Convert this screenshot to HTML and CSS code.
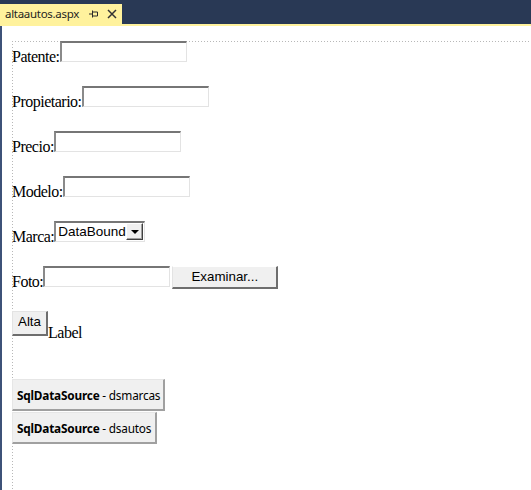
FILE: index.html
```html
<!DOCTYPE html>
<html>
<head>
<meta charset="utf-8">
<link rel="stylesheet" href="styles.css">
</head>
<body>
<div class="topbar">
  <div class="tab">
    <span class="tab-title">altaautos.aspx</span>
    <svg class="pin" width="9" height="8" viewBox="0 0 9 8"><path d="M0 4H3.5M3.5 0.5V7.5M3.5 2H8.5V6H3.5" fill="none" stroke="#2b2b2b" stroke-width="1"/></svg>
    <svg class="close" width="10" height="10" viewBox="0 0 10 10"><path d="M1 1L9 9M9 1L1 9" fill="none" stroke="#333" stroke-width="1.5"/></svg>
  </div>
</div>
<div class="tabline"></div>
<div class="main">
  <div class="edge"></div>
  <div class="wrap">
    <div class="surface">
      <div class="row"><span class="lbl">Patente:</span><span class="tb"></span></div>
      <div class="row"><span class="lbl">Propietario:</span><span class="tb"></span></div>
      <div class="row"><span class="lbl">Precio:</span><span class="tb"></span></div>
      <div class="row"><span class="lbl">Modelo:</span><span class="tb"></span></div>
      <div class="row"><span class="lbl">Marca:</span><span class="sel"><span class="sel-text">DataBound</span><span class="sel-btn"><span class="tri"></span></span></span></div>
      <div class="row"><span class="lbl">Foto:</span><span class="tb"></span><span class="btn btn-exam">Examinar...</span></div>
      <div class="row row-alta"><span class="btn btn-alta">Alta</span><span class="lbl lbl-label">Label</span></div>
      <div class="ds ds1"><b>SqlDataSource</b> - dsmarcas</div>
      <div class="ds ds2"><b>SqlDataSource</b> - dsautos</div>
    </div>
  </div>
</div>
</body>
</html>
```

FILE: styles.css
```css
html, body {
  margin: 0;
  padding: 0;
  background: #ffffff;
  width: 531px;
  height: 490px;
  overflow: hidden;
}
body {
  font-family: "Liberation Serif", "Times New Roman", serif;
  font-size: 16px;
  color: #000;
}
.topbar {
  height: 24px;
  background: #293955;
  display: flex;
  align-items: flex-end;
}
.tab {
  height: 20px;
  width: 122px;
  background: #fff29d;
  display: flex;
  align-items: center;
  box-sizing: border-box;
  padding-left: 5px;
  font-family: "Noto Sans", "Open Sans", sans-serif;
  font-size: 11.5px;
  color: #1e1e1e;
}
.tab-title {
  line-height: 16px;
  letter-spacing: -0.3px;
}
.pin {
  margin-left: 10px;
  display: block;
}
.close {
  margin-left: 9px;
  display: block;
}
.tabline {
  height: 2px;
  background: #fff29d;
}
.main {
  display: flex;
  height: 464px;
}
.edge {
  width: 2px;
  background: #3e5278;
  flex: none;
}
.wrap {
  flex: 1;
  padding: 15px 0 0 10px;
}
.surface {
  height: 100%;
  background-image:
    repeating-linear-gradient(to right, #b8b8b8 0 1px, transparent 1px 3px),
    repeating-linear-gradient(to bottom, #b8b8b8 0 1px, transparent 1px 3px);
  background-size: 100% 1px, 1px 100%;
  background-repeat: no-repeat;
  background-position: 0 0, 0 0;
}
.row {
  display: flex;
  align-items: flex-start;
  height: 21px;
  margin-bottom: 24px;
}
.lbl {
  line-height: 16px;
  margin-top: 8px;
  white-space: nowrap;
  letter-spacing: -0.5px;
}
.tb {
  display: block;
  width: 127px;
  height: 21px;
  box-sizing: border-box;
  border-style: solid;
  border-width: 2px 1px 1px 2px;
  border-color: #767676 #e3e3e3 #e3e3e3 #8a8a8a;
  background: #fff;
  flex: none;
}
.sel {
  display: flex;
  width: 91px;
  height: 21px;
  box-sizing: border-box;
  border-style: solid;
  border-width: 2px 1px 1px 2px;
  border-color: #767676 #e3e3e3 #e3e3e3 #8a8a8a;
  background: #fff;
  font-family: "Liberation Sans", Arial, sans-serif;
  font-size: 13.5px;
  flex: none;
}
.sel-text {
  flex: 1;
  line-height: 17px;
  padding-left: 2px;
}
.sel-btn {
  width: 17px;
  height: 17px;
  margin: 0 1px 0 0;
  box-sizing: border-box;
  background: #f0f0f0;
  border-style: solid;
  border-width: 1px;
  border-color: #ffffff #404040 #404040 #ffffff;
  box-shadow: inset -1px -1px 0 #a0a0a0;
  display: flex;
  align-items: center;
  justify-content: center;
}
.tri {
  width: 0;
  height: 0;
  border-left: 4px solid transparent;
  border-right: 4px solid transparent;
  border-top: 4px solid #000;
  margin-top: 1px;
}
.btn {
  display: flex;
  align-items: center;
  justify-content: center;
  box-sizing: border-box;
  background: #f0f0f0;
  border-style: solid;
  border-width: 1px 2px 2px 1px;
  border-color: #ffffff #6e6e6e #6e6e6e #e3e3e3;
  font-family: "Liberation Sans", Arial, sans-serif;
  font-size: 13.33px;
  color: #000;
  flex: none;
}
.btn-exam {
  width: 106px;
  height: 23px;
  margin-left: 2px;
  padding-bottom: 2px;
}
.row-alta {
  height: 25px;
  margin-bottom: 43px;
}
.btn-alta {
  width: 36px;
  height: 25px;
  border-color: #e3e3e3 #6e6e6e #6e6e6e #e3e3e3;
  padding-bottom: 3px;
}
.lbl-label {
  margin-top: 14px;
}
.ds {
  box-sizing: border-box;
  height: 32px;
  background: #f0f0f0;
  border-style: solid;
  border-width: 1px 2px 2px 1px;
  border-color: #e6e6e6 #a0a0a0 #a0a0a0 #e6e6e6;
  font-family: "Noto Sans", "Open Sans", sans-serif;
  font-size: 11.8px;
  color: #000;
  padding-left: 4px;
  display: flex;
  align-items: center;
  white-space: pre;
  letter-spacing: -0.2px;
}
.ds b {
  font-weight: 700;
}
.ds1 {
  width: 153px;
}
.ds2 {
  width: 145px;
  margin-top: 1px;
}
```
